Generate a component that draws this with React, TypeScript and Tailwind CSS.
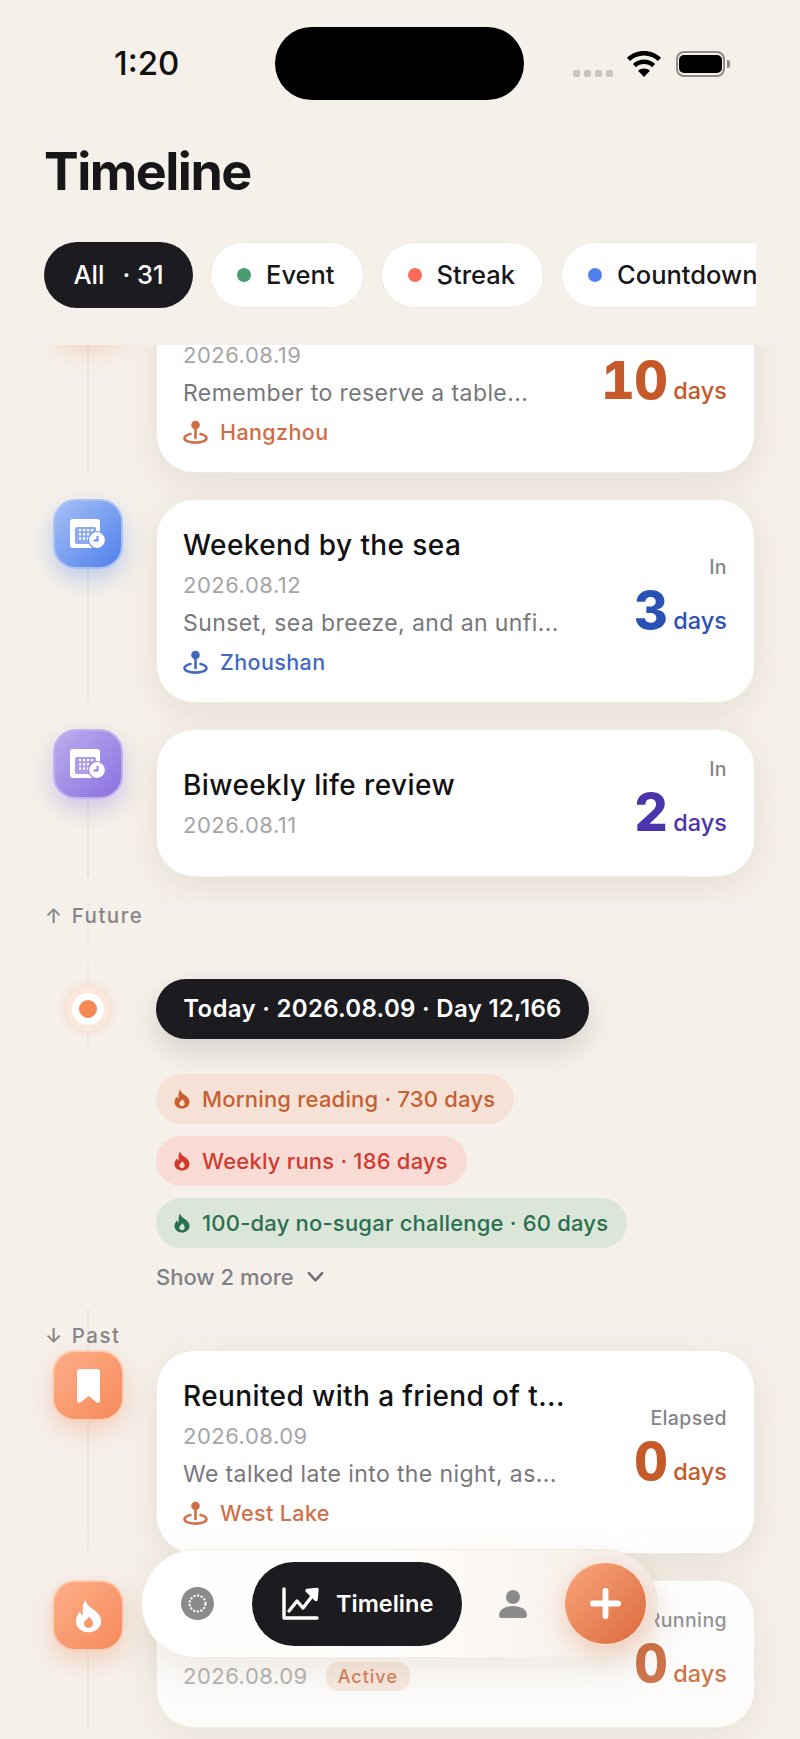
const FLAME =
  "M6 .5C7 3 8 4.2 10 5.6c3 2 5.5 4 5.5 7.5 0 4-3.5 6.5-7.5 6.5S.5 17 .5 13.1c0-2.5 1.4-4.5 2.5-5.6.3 1 1 1.8 1.8 2C4.2 6 4.5 3 6 .5Z";
const FLAME_HOLE =
  "M8.2 10.3c1.4 1.5 2.5 2.8 2.5 4.2 0 1.5-1.2 2.6-2.7 2.6s-2.7-1.1-2.7-2.6c0-1.6 2-2.2 2.9-4.2Z";

function Flame({ className }: { className: string }) {
  return (
    <svg viewBox="0 0 16 20" className={className} fill="currentColor">
      <path fillRule="evenodd" d={`${FLAME}${FLAME_HOLE}`} />
    </svg>
  );
}

function Pin() {
  return (
    <svg viewBox="0 0 25 24" className="h-[24px] w-[25px] shrink-0" fill="none">
      <circle cx="12.500" cy="5" r="4.300" fill="currentColor" />
      <path d="M12.500 8v10" stroke="currentColor" strokeWidth="2.600" strokeLinecap="round" />
      <path
        d="M7.500 14C3.800 14.800 1.500 16.200 1.500 18.200c0 2.600 4.900 4.400 11 4.400s11-1.800 11-4.400c0-2-2.300-3.400-6-4.200"
        stroke="currentColor"
        strokeWidth="2.600"
        strokeLinecap="round"
      />
    </svg>
  );
}

function CalendarClock({ tone }: { tone: string }) {
  return (
    <svg viewBox="0 0 36 30" className="h-[30px] w-[36px]">
      <path d="M3 0h24a3 3 0 0 1 3 3v23a3 3 0 0 1-3 3H3a3 3 0 0 1-3-3V3a3 3 0 0 1 3-3Z" fill="#fff" />
      <rect x="5" y="8" width="21" height="17" rx="1.500" fill={tone} opacity="0.8" />
      {[0, 1, 2, 3].map((c) =>
        [0, 1, 2].map((r) => (
          <rect key={`${c}-${r}`} x={9 + c * 4} y={10 + r * 4.200} width="2.200" height="2.200" fill="#fff" />
        )),
      )}
      <circle cx="27" cy="21" r="8.500" fill="#fff" stroke={tone} strokeWidth="1.200" />
      <path d="M27.500 17v4.500h-4" fill="none" stroke={tone} strokeWidth="2" />
    </svg>
  );
}

function Count({ label, n, color }: { label: string; n: string; color: string }) {
  return (
    <div className="mb-[6px] flex flex-col items-end">
      <span className="h-[26px] text-[19.500px] font-medium leading-[26px] tracking-[0.4px] text-[#85858a]">{label}</span>
      <div className="flex h-[62px] items-baseline gap-[6px]">
        <span className={`text-[52px] font-extrabold leading-[62px] tracking-[-0.5px] tabular-nums ${color}`}>{n}</span>
        <span className={`text-[23.500px] font-medium leading-[30px] ${color}`}>days</span>
      </div>
    </div>
  );
}

function Node({ grad, children }: { grad: string; children?: React.ReactNode }) {
  return (
    <div
      className={`z-10 flex shrink-0 items-center justify-center rounded-[23px] border-2 bg-gradient-to-br ${grad}`}
    >
      {children}
    </div>
  );
}

function Row({
  node,
  children,
  side,
  height = "h-[204px]",
}: {
  node: React.ReactNode;
  children: React.ReactNode;
  side: React.ReactNode;
  height?: string;
}) {
  return (
    <div className="flex pb-[26px] pl-[53px] pr-[45px]">
      <div className="mr-[33px] flex w-[70px] shrink-0 flex-col items-center">
        {node}
        <div className="w-[2px] flex-1 bg-[#ebe5db]" />
      </div>
      <div
        className={`flex flex-1 items-center justify-between rounded-[38px] border border-[#f1ebe0] bg-white pl-[26px] pr-[27px] shadow-[0_10px_34px_rgba(140,110,70,0.13)] ${height}`}
      >
        <div className="min-w-0">{children}</div>
        {side}
      </div>
    </div>
  );
}

function Title({ text }: { text: string }) {
  return (
    <div className="h-[38px] whitespace-nowrap text-[28px] font-medium leading-[38px] tracking-[0.4px] text-[#111113]">
      {text}
    </div>
  );
}

function DateLine({ text }: { text: string }) {
  return <div className="mt-[6px] h-[30px] text-[22px] leading-[30px] tracking-[0.5px] text-[#a5a5a7]">{text}</div>;
}

function Desc({ text }: { text: string }) {
  return (
    <div className="mt-[8px] h-[30px] whitespace-nowrap text-[23px] leading-[30px] tracking-[0.4px] text-[#77777b]">
      {text}
    </div>
  );
}

function Place({ text, color }: { text: string; color: string }) {
  return (
    <div className={`mt-[9px] flex h-[30px] items-center gap-[12px] text-[21.500px] font-medium leading-[30px] tracking-[0.4px] ${color}`}>
      <Pin />
      {text}
    </div>
  );
}

function FilterChip({ dot, text }: { dot: string; text: string }) {
  return (
    <div className="flex h-[66px] shrink-0 items-center gap-[15px] rounded-[33px] border border-[#efe9dd] bg-white pl-[26px] pr-[28px] text-[25.500px] font-medium text-[#17171a]">
      <span className={`h-[14px] w-[14px] rounded-full ${dot}`} />
      {text}
    </div>
  );
}

function Streak({ text, cls }: { text: string; cls: string }) {
  return (
    <div className={`flex h-[50px] w-fit items-center gap-[12px] rounded-[25px] pl-[18px] pr-[19px] text-[22px] font-medium tracking-[0.2px] ${cls}`}>
      <Flame className="h-[20px] w-[16px]" />
      {text}
    </div>
  );
}

function SideLabel({ children, cls }: { children: React.ReactNode; cls: string }) {
  return (
    <div className={`relative pl-[45px] ${cls}`}>
      <div className="absolute bottom-0 left-[87px] top-0 w-[2px] bg-[#ebe5db]" />
      {children}
    </div>
  );
}

const orangeNode =
  "h-[71px] w-[72px] border-[#fbd0ba] from-[#fdae88] to-[#f5895a] shadow-[0_10px_22px_rgba(240,130,85,0.28)]";

export default function App() {
  return (
    <div className="relative flex h-[1739px] w-[800px] flex-col overflow-hidden bg-[#f5f0e9] [font-family:Inter,sans-serif]">
      {/* status bar */}
      <div className="mt-[27px] flex h-[73px] shrink-0 items-center pl-[114px]">
        <span className="w-[161px] text-[33px] font-medium leading-none text-[#111]">1:20</span>
        <div className="h-[73px] w-[249px] rounded-[37px] bg-black" />
        <div className="ml-[49px] mt-[19px] flex gap-[4px]">
          {[0, 1, 2, 3].map((i) => (
            <span key={i} className="h-[7px] w-[7px] rounded-[2px] bg-[#c9c6c1]" />
          ))}
        </div>
        <svg viewBox="0 0 34 26" className="ml-[14px] h-[26px] w-[34px]" fill="#000">
          <path d="M17 0c6.600 0 12.600 2.600 17 6.800l-3 3.200C27.400 6.600 22.500 4.500 17 4.500S6.600 6.600 3 10L0 6.800C4.400 2.600 10.400 0 17 0Z" />
          <path d="M17 8.600c4.300 0 8.200 1.700 11.100 4.400l-3.100 3.200C22.900 14.300 20.100 13.100 17 13.100s-5.900 1.200-8 3.100L5.900 13C8.800 10.300 12.700 8.600 17 8.600Z" />
          <path d="M17 17.500c2.300 0 4.300.9 5.900 2.300L17 26l-5.900-6.200c1.600-1.400 3.600-2.300 5.900-2.300Z" />
        </svg>
        <div className="ml-[15px] flex items-center gap-[2px]">
          <div className="flex h-[26px] w-[49px] items-center justify-center rounded-[8px] border-2 border-[#8f8c86] p-[1px]">
            <div className="h-[18px] w-[43px] rounded-[5px] bg-black" />
          </div>
          <div className="h-[8px] w-[3px] rounded-r-[2px] bg-[#8f8c86]" />
        </div>
      </div>

      {/* header */}
      <h1 className="ml-[44px] mt-[44px] h-[56px] shrink-0 text-[52px] font-bold leading-[56px] tracking-[-1.500px] text-[#17171a]">
        Timeline
      </h1>

      <div className="ml-[44px] mt-[42px] flex w-[712px] shrink-0 gap-[17px] overflow-hidden">
        <div className="flex h-[66px] w-[149px] shrink-0 items-center justify-center gap-[18px] rounded-[33px] bg-[#1c1c20] text-[25.500px] font-medium text-white">
          <span>All</span>
          <span>· 31</span>
        </div>
        <FilterChip dot="bg-[#4c9a72]" text="Event" />
        <FilterChip dot="bg-[#fb6a5b]" text="Streak" />
        <FilterChip dot="bg-[#4f80f0]" text="Countdown" />
      </div>

      {/* timeline list, already scrolled a little */}
      <div className="mt-[37px] min-h-0 flex-1 overflow-hidden">
        <div className="-mt-[76px]">
          <Row node={<Node grad={orangeNode} />} side={<Count label="In" n="10" color="text-[#c5592a]" />}>
            <Title text="Anniversary dinner" />
            <DateLine text="2026.08.19" />
            <Desc text="Remember to reserve a table..." />
            <Place text="Hangzhou" color="text-[#cf6d45]" />
          </Row>
          <Row
            node={
              <Node grad="h-[70px] w-[70px] border-[#a9c2f6] from-[#a6bff4] to-[#4f7fea] shadow-[0_10px_22px_rgba(80,125,235,0.32)]">
                <CalendarClock tone="#6f96ee" />
              </Node>
            }
            side={<Count label="In" n="3" color="text-[#2a52b5]" />}
          >
            <Title text="Weekend by the sea" />
            <DateLine text="2026.08.12" />
            <Desc text="Sunset, sea breeze, and an unfi..." />
            <Place text="Zhoushan" color="text-[#4468c0]" />
          </Row>
          <Row
            height="h-[148px]"
            node={
              <Node grad="h-[70px] w-[70px] border-[#bfb0ee] from-[#bbaeec] to-[#8b6fe0] shadow-[0_10px_22px_rgba(135,105,225,0.32)]">
                <CalendarClock tone="#9a83e4" />
              </Node>
            }
            side={<Count label="In" n="2" color="text-[#4a35ac]" />}
          >
            <Title text="Biweekly life review" />
            <DateLine text="2026.08.11" />
          </Row>

          <SideLabel cls="h-[40px]">
            <div className="relative flex h-[26px] items-center gap-[8px] bg-[#f5f0e9]/70 text-[20.500px] font-medium tracking-[1.500px] text-[#85858a]">
              <span className="text-[20px] leading-none">↑</span>
              Future
            </div>
          </SideLabel>

          {/* today */}
          <div className="relative mt-[19px] flex h-[93px] items-center pl-[65px]">
            <div className="absolute bottom-0 left-[87px] top-0 w-[2px] bg-gradient-to-b from-[#ebe5db]/40 via-[#ebe5db] to-[#ebe5db]/40" />
            <div className="relative flex h-[46px] w-[46px] items-center justify-center rounded-full border border-[#f9dfd0] bg-[#f9e8dd] shadow-[0_0_8px_rgba(245,150,100,0.25)]">
              <div className="flex h-[32px] w-[32px] items-center justify-center rounded-full bg-white">
                <div className="h-[18px] w-[18px] rounded-full bg-[#f58755]" />
              </div>
            </div>
            <div className="ml-[45px] flex h-[60px] w-[433px] items-center justify-center rounded-[30px] bg-[#1c1c20] text-[24px] font-semibold tracking-[0.3px] text-white shadow-[0_12px_28px_rgba(30,30,30,0.14)]">
              Today · 2026.08.09 · Day 12,166
            </div>
          </div>

          <div className="ml-[156px] mt-[19px] flex flex-col gap-[12px]">
            <Streak text="Morning reading · 730 days" cls="bg-[#f6e1d6] text-[#c65f30]" />
            <Streak text="Weekly runs · 186 days" cls="bg-[#f8dbd5] text-[#d23a2e]" />
            <Streak text="100-day no-sugar challenge · 60 days" cls="bg-[#dbe5d8] text-[#2a7050]" />
            <div className="mt-[3px] flex h-[28px] items-center gap-[13px] text-[22px] font-medium leading-[28px] text-[#7f7f86]">
              Show 2 more
              <svg viewBox="0 0 18 12" className="h-[12px] w-[17px]" fill="none" stroke="#6f6f78" strokeWidth="2.800" strokeLinecap="round" strokeLinejoin="round">
                <path d="M2 2l7 7.500L16 2" />
              </svg>
            </div>
          </div>

          <SideLabel cls="mt-[18px] h-[41px]">
            <div className="relative top-[14px] flex h-[26px] items-center gap-[8px] text-[20.500px] font-medium tracking-[1.500px] text-[#85858a]">
              <span className="text-[20px] leading-none">↓</span>
              Past
            </div>
          </SideLabel>

          <Row
            node={
              <Node grad={orangeNode}>
                <svg viewBox="0 0 23 34" className="h-[34px] w-[23px]" fill="#fff">
                  <path d="M3 0h17a3 3 0 0 1 3 3v28.500c0 2-2.200 3-3.600 1.700L11.500 27l-7.900 6.200C2.200 34.500 0 33.500 0 31.500V3a3 3 0 0 1 3-3Z" />
                </svg>
              </Node>
            }
            side={<Count label="Elapsed" n="0" color="text-[#c5592a]" />}
          >
            <Title text="Reunited with a friend of t..." />
            <DateLine text="2026.08.09" />
            <Desc text="We talked late into the night, as..." />
            <Place text="West Lake" color="text-[#cf6d45]" />
          </Row>
          <Row
            height="h-[148px]"
            node={
              <Node grad={orangeNode}>
                <Flame className="h-[34px] w-[27px] text-white" />
              </Node>
            }
            side={<Count label="Running" n="0" color="text-[#c5592a]" />}
          >
            <Title text="Evening yoga" />
            <div className="flex items-end gap-[18px]">
              <DateLine text="2026.08.09" />
              <span className="flex h-[29px] items-center rounded-[12px] bg-[#f8e7dd] px-[12px] text-[18px] font-medium tracking-[1px] text-[#c9673c]">
                Active
              </span>
            </div>
          </Row>
        </div>
      </div>

      {/* fade under the tab bar */}
      <div className="pointer-events-none absolute bottom-0 left-0 h-[240px] w-[800px] bg-gradient-to-b from-[#f5f0e9]/0 to-[#f5f0e9]/25" />

      {/* tab bar */}
      <div className="absolute bottom-[81px] left-[141px] flex h-[109px] w-[517px] items-center rounded-[55px] border border-[#f3ecdf] bg-gradient-to-r from-white via-[#fffdfb] to-[#f4ece5] pl-[39px] shadow-[0_14px_36px_rgba(140,110,70,0.14)]">
        <svg viewBox="0 0 33 33" className="h-[33px] w-[33px] shrink-0">
          <circle cx="16.500" cy="16.500" r="16.500" fill="#8b8b8b" />
          <circle cx="16.500" cy="16.500" r="8" fill="none" stroke="#fff" strokeWidth="2" strokeDasharray="2.200 1.500" />
        </svg>
        <div className="ml-[38px] flex h-[84px] w-[210px] shrink-0 items-center gap-[17px] rounded-[42px] bg-[#1c1c20] pl-[30px] text-[23.500px] font-semibold text-white">
          <svg viewBox="0 0 37 33" className="h-[33px] w-[37px] shrink-0" fill="none" stroke="#fff" strokeWidth="3.400" strokeLinecap="round" strokeLinejoin="round">
            <path d="M2 2v29h33" />
            <path d="M7 24l8-10 6 7 10-13" />
            <path d="M25 3.500l10-1-1 10z" fill="#fff" />
          </svg>
          Timeline
        </div>
        <svg viewBox="0 0 28 28" className="ml-[37px] h-[28px] w-[28px] shrink-0" fill="#8b8b8b">
          <circle cx="14" cy="7" r="7" />
          <path d="M14 16c8 0 14 3.500 14 9.500 0 1.600-1 2.500-2.500 2.500h-23C1 28 0 27.100 0 25.500 0 19.500 6 16 14 16Z" />
        </svg>
        <div className="ml-[37px] flex h-[83px] w-[83px] shrink-0 items-center justify-center rounded-full border border-[#fde3d4] bg-gradient-to-br from-[#fba67d] to-[#d9693a] shadow-[0_8px_24px_rgba(225,120,70,0.3)]">
          <svg viewBox="0 0 32 32" className="h-[31px] w-[31px]" stroke="#fff" strokeWidth="6" strokeLinecap="round">
            <path d="M16 3v26M3 16h26" />
          </svg>
        </div>
      </div>
    </div>
  );
}
